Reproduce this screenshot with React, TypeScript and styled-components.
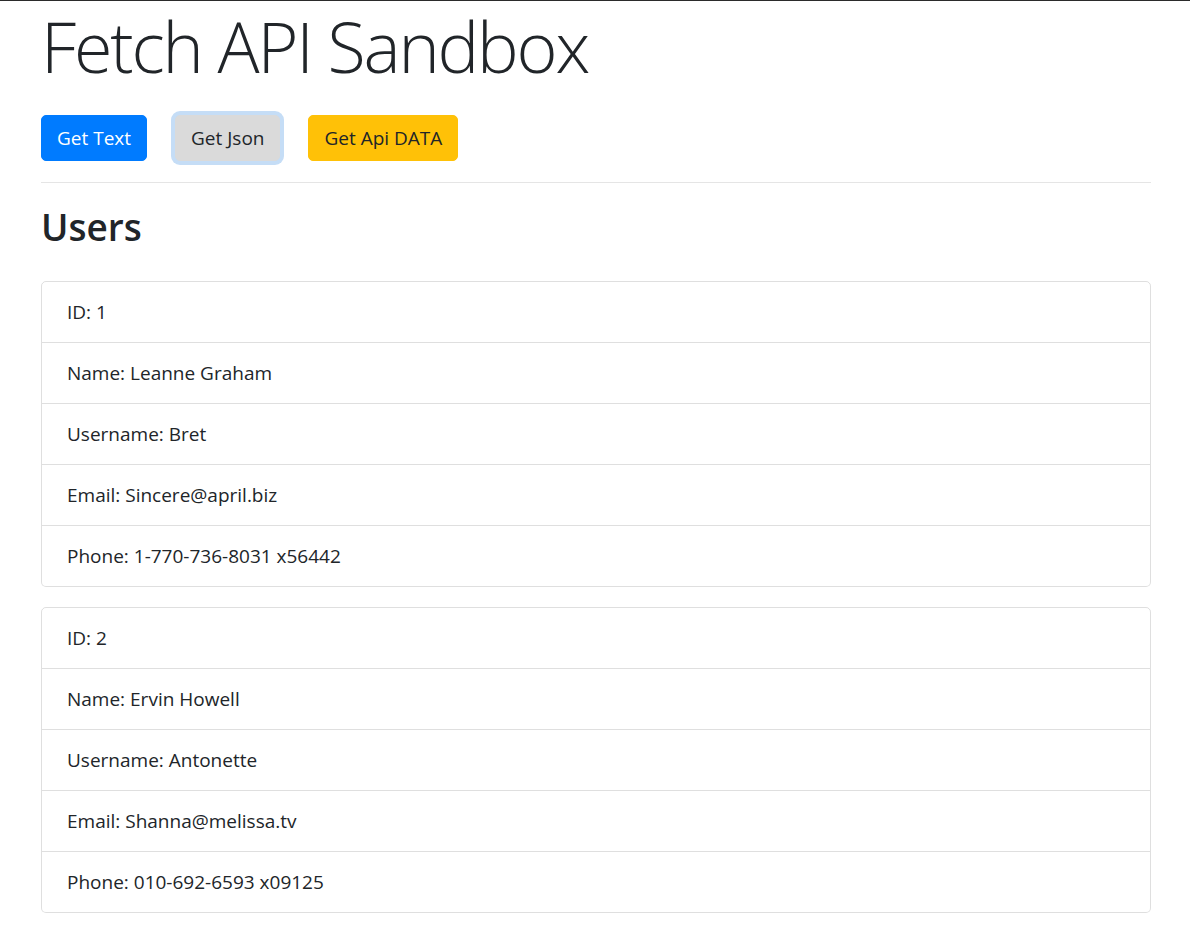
import React from "react";
import styled, { createGlobalStyle, css } from "styled-components";

const GlobalStyle = createGlobalStyle`
  html, body {
    margin: 0;
    padding: 0;
    background: #fff;
  }
  body {
    border-top: 1px solid #2b2b2b;
    font-family: "Open Sans", "Noto Sans", "Liberation Sans", sans-serif;
    color: #212529;
  }
  * {
    box-sizing: border-box;
  }
`;

const Container = styled.div`
  width: 1110px;
  margin: 0 0 0 41px;
`;

const Title = styled.h1`
  margin: 0 0 23px;
  font-size: 70px;
  font-weight: 300;
  line-height: 1.3;
  letter-spacing: -2.2px;
`;

const ButtonRow = styled.div`
  display: flex;
  align-items: center;
  gap: 28px;
`;

type Variant = "primary" | "light" | "warning";

const variants = {
  primary: css`
    background: #007bff;
    border-color: #007bff;
    color: #fff;
  `,
  light: css`
    background: #dadada;
    border-color: #dadada;
    color: #212529;
    box-shadow: 0 0 0 4px #c5ddf6;
  `,
  warning: css`
    background: #ffc107;
    border-color: #ffc107;
    color: #212529;
  `,
};

const Button = styled.button<{ $variant: Variant }>`
  font-family: inherit;
  font-size: 19px;
  line-height: 30px;
  padding: 7px 15px;
  border: 1px solid transparent;
  border-radius: 5px;
  cursor: pointer;
  ${(p) => variants[p.$variant]}
`;

const Divider = styled.hr`
  margin: 21px 0 0;
  border: 0;
  border-top: 1px solid rgba(0, 0, 0, 0.1);
`;

const SectionTitle = styled.h2`
  margin: 22px 0 0;
  font-size: 37px;
  font-weight: 600;
  line-height: 1.2;
`;

const UserList = styled.ul`
  list-style: none;
  margin: 32px 0 0;
  padding: 0;
  border-radius: 5px;
  & + & {
    margin-top: 20px;
  }
`;

const UserItem = styled.li`
  padding: 15px 25px;
  font-size: 19px;
  line-height: 30px;
  border: 1px solid rgba(0, 0, 0, 0.125);
  & + & {
    border-top: 0;
  }
  &:first-child {
    border-top-left-radius: 5px;
    border-top-right-radius: 5px;
  }
  &:last-child {
    border-bottom-left-radius: 5px;
    border-bottom-right-radius: 5px;
  }
`;

type User = {
  id: number;
  name: string;
  username: string;
  email: string;
  phone: string;
};

const users: User[] = [
  {
    id: 1,
    name: "Leanne Graham",
    username: "Bret",
    email: "Sincere@april.biz",
    phone: "1-770-736-8031 x56442",
  },
  {
    id: 2,
    name: "Ervin Howell",
    username: "Antonette",
    email: "Shanna@melissa.tv",
    phone: "010-692-6593 x09125",
  },
];

const App = (): JSX.Element => {
  return (
    <>
      <GlobalStyle />
      <Container>
        <Title>Fetch API Sandbox</Title>
        <ButtonRow>
          <Button $variant="primary">Get Text</Button>
          <Button $variant="light">Get Json</Button>
          <Button $variant="warning">Get Api DATA</Button>
        </ButtonRow>
        <Divider />
        <SectionTitle>Users</SectionTitle>
        {users.map((user) => (
          <UserList key={user.id}>
            <UserItem>ID: {user.id}</UserItem>
            <UserItem>Name: {user.name}</UserItem>
            <UserItem>Username: {user.username}</UserItem>
            <UserItem>Email: {user.email}</UserItem>
            <UserItem>Phone: {user.phone}</UserItem>
          </UserList>
        ))}
      </Container>
    </>
  );
};

export default App;
